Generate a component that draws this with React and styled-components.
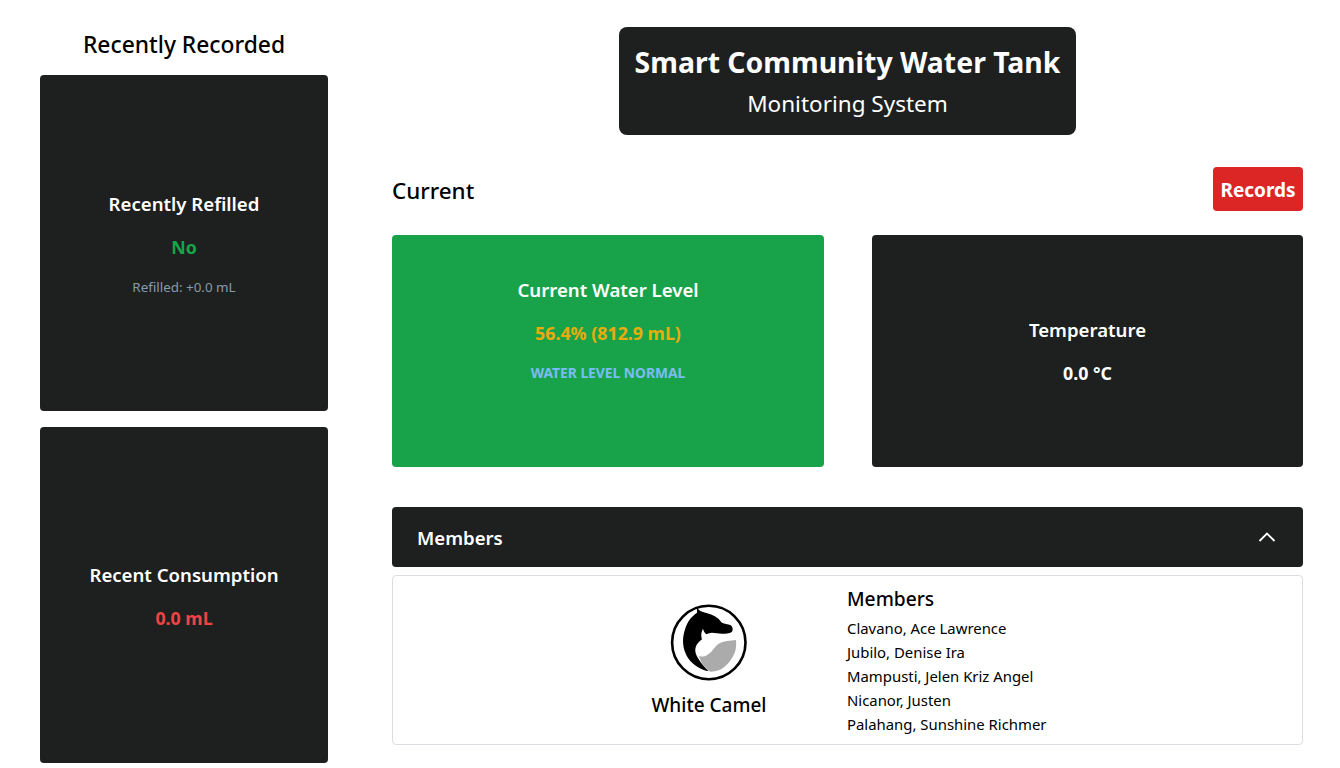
import React from 'react';
import styled, { createGlobalStyle } from 'styled-components';

const dark = '#1e1f1f';

const GlobalStyle = createGlobalStyle`
  html, body {
    margin: 0;
    padding: 0;
    background: #fff;
    font-family: "Noto Sans", "Open Sans", sans-serif;
    color: #000;
  }
  * { box-sizing: border-box; }
`;

const members = [
  'Clavano, Ace Lawrence',
  'Jubilo, Denise Ira',
  'Mampusti, Jelen Kriz Angel',
  'Nicanor, Justen',
  'Palahang, Sunshine Richmer',
];

const HorseLogo = () => (
  <svg width="78" height="78" viewBox="0 0 78 78">
    <circle cx="38.8" cy="38.5" r="36.7" fill="#fff" stroke="#000" strokeWidth="2.6" />
    <path
      d="M27 3.7 C28 5 29 6 30.3 7 C33 8.2 36 8.8 38.7 9.7 C42 10.8 44.8 12 47 13.7 C49 15 50.3 17 52 18.7 C54.5 19.8 57.8 20 60.3 21 C61.8 22 62.7 23.5 62.7 25.3 C62.7 27 61.8 28.2 60.3 28.7 C57.5 29.7 54.8 29.8 52 29.7 C48.5 29.5 45.3 28.8 42 28.7 C39.8 28.7 38 29.5 36.5 30.3 C34.8 29 33.6 27 33 24.7 C31.8 27 31.1 29.5 31.3 32 C31.4 33.4 31.6 34.4 32 35.3 C30.2 36.6 28.5 38.4 27 40.3 C25.8 42.3 25.2 44.7 25.3 47 C25.6 50 27 52.8 28.7 55.3 C30.2 57.8 31.8 60 33.7 62 C35.3 64 37 65.7 38.7 67 C36.8 66.9 35.2 66.6 33.7 66 C28.5 64 24 61 20.3 57 C17 53 14.8 48.5 13.7 43.7 C12.8 39 12.8 34.8 13.7 30.3 C14.8 25.5 16.3 21 18.7 17 C21 13.6 23.8 10.8 27 8.7 Z"
      fill="#000"
    />
    <path
      d="M28.7 52 C31 52.8 33.2 52.8 35.3 52 C38 50.8 40.2 49.2 42 47 C44.2 44.4 46 41.4 48.7 39.7 C51.2 38.2 54 37.4 57 37 C60 36.5 63 36.2 66 36 C66.4 39.8 66.2 43.5 65.3 47 C63.8 51.5 61.6 55.3 58.7 58.7 C55.8 62 52.5 64.6 48.7 66.3 C46 67.3 43.2 67.8 40.3 67.7 C38 66.2 35.7 64.2 33.7 62 C31.7 59 30 55.5 28.7 52 Z"
      fill="#ababab"
    />
  </svg>
);

const App = () => (
  <>
    <GlobalStyle />
    <Page>
      <Sidebar>
        <SideTitle>Recently Recorded</SideTitle>
        <SideCard>
          <CardTitle>Recently Refilled</CardTitle>
          <CardValue color="#16a34a">No</CardValue>
          <SmallNote>Refilled: +0.0 mL</SmallNote>
        </SideCard>
        <SideCard>
          <CardTitle>Recent Consumption</CardTitle>
          <CardValue color="#ef4444">0.0 mL</CardValue>
        </SideCard>
      </Sidebar>
      <Main>
        <HeaderRow>
          <HeaderCard>
            <HeaderTitle>Smart Community Water Tank</HeaderTitle>
            <HeaderSub>Monitoring System</HeaderSub>
          </HeaderCard>
        </HeaderRow>
        <CurrentRow>
          <CurrentTitle>Current</CurrentTitle>
          <RecordsButton>Records</RecordsButton>
        </CurrentRow>
        <CardGrid>
          <StatCard bg="#18a34b" $lift={45}>
            <CardTitle>Current Water Level</CardTitle>
            <CardValue color="#eaac0c">56.4% (812.9 mL)</CardValue>
            <StatusNote>WATER LEVEL NORMAL</StatusNote>
          </StatCard>
          <StatCard bg={dark} $lift={1}>
            <CardTitle>Temperature</CardTitle>
            <CardValue color="#fff">0.0 °C</CardValue>
          </StatCard>
        </CardGrid>
        <AccordionBar>
          <span>Members</span>
          <svg width="20" height="20" viewBox="0 0 20 20" fill="none" stroke="#fff" strokeWidth="1.8">
            <path d="M2.5 14 L10 6.5 L17.5 14" />
          </svg>
        </AccordionBar>
        <MembersPanel>
          <TeamBlock>
            <HorseLogo />
            <TeamName>White Camel</TeamName>
          </TeamBlock>
          <div>
            <MembersTitle>Members</MembersTitle>
            {members.map((name) => (
              <MemberName key={name}>{name}</MemberName>
            ))}
          </div>
        </MembersPanel>
      </Main>
    </Page>
  </>
);

const Page = styled.div`
  display: grid;
  grid-template-columns: 288px 911px;
  column-gap: 64px;
  padding: 27px 37px 5px 40px;
  height: 768px;
  overflow: hidden;
`;

const Sidebar = styled.aside`
  display: flex;
  flex-direction: column;
  gap: 16px;
`;

const SideTitle = styled.h2`
  margin: 0 0 -16px;
  height: 48px;
  text-align: center;
  font-size: 22.8px;
  font-weight: 500;
  line-height: 36px;
`;

const Card = styled.div`
  display: flex;
  flex-direction: column;
  align-items: center;
  justify-content: center;
  border-radius: 4px;
  color: #fff;
`;

const SideCard = styled(Card)`
  height: 336px;
  background: ${dark};
`;

const StatCard = styled(Card)`
  height: 232px;
  padding-bottom: ${({ $lift }) => $lift}px;
  background: ${({ bg }) => bg};
`;

const CardTitle = styled.div`
  font-size: 18.6px;
  font-weight: 600;
  line-height: 28px;
`;

const CardValue = styled.div`
  margin-top: 17px;
  font-size: 17.8px;
  font-weight: 700;
  line-height: 24px;
  color: ${({ color }) => color};
`;

const SmallNote = styled.div`
  margin-top: 19px;
  font-size: 13.4px;
  line-height: 18px;
  color: #8a9ba8;
`;

const StatusNote = styled.div`
  margin-top: 19px;
  font-size: 13.8px;
  font-weight: 700;
  line-height: 18px;
  color: #7cbcf5;
`;

const Main = styled.main`
  display: flex;
  flex-direction: column;
`;

const HeaderRow = styled.div`
  display: flex;
  justify-content: center;
`;

const HeaderCard = styled.div`
  width: 457px;
  height: 108px;
  display: flex;
  flex-direction: column;
  align-items: center;
  justify-content: center;
  border-radius: 8px;
  background: ${dark};
  color: #fff;
`;

const HeaderTitle = styled.h1`
  margin: 0 0 3px;
  font-size: 28.4px;
  font-weight: 700;
  line-height: 42px;
`;

const HeaderSub = styled.div`
  font-size: 22.5px;
  line-height: 36px;
`;

const CurrentRow = styled.div`
  display: flex;
  align-items: center;
  justify-content: space-between;
  margin-top: 32px;
`;

const CurrentTitle = styled.h2`
  margin: 3px 0 0;
  font-size: 22.4px;
  font-weight: 500;
`;

const RecordsButton = styled.button`
  width: 90px;
  height: 44px;
  padding: 2px 0 0;
  border: none;
  border-radius: 4px;
  background: #dc2626;
  color: #fff;
  font-family: inherit;
  font-size: 19px;
  font-weight: 700;
`;

const CardGrid = styled.div`
  display: grid;
  grid-template-columns: 432px 431px;
  column-gap: 48px;
  margin-top: 24px;
`;

const AccordionBar = styled.div`
  display: flex;
  align-items: center;
  justify-content: space-between;
  height: 60px;
  margin-top: 40px;
  padding: 0 26px 0 25px;
  border-radius: 4px;
  background: ${dark};
  color: #fff;
  font-size: 18.6px;
  font-weight: 600;
`;

const MembersPanel = styled.div`
  display: grid;
  grid-template-columns: 454px 1fr;
  height: 170px;
  margin-top: 8px;
  border: 1px solid #dcdde3;
  border-radius: 4px;
`;

const TeamBlock = styled.div`
  display: flex;
  flex-direction: column;
  align-items: center;
  padding: 28px 0 0 178px;
`;

const TeamName = styled.div`
  margin-top: 10px;
  font-size: 19px;
  font-weight: 500;
  line-height: 27px;
`;

const MembersTitle = styled.div`
  margin-top: 8px;
  margin-bottom: 2px;
  font-size: 19.2px;
  font-weight: 500;
  line-height: 30px;
`;

const MemberName = styled.div`
  font-size: 14.9px;
  line-height: 24px;
`;

export default App;
